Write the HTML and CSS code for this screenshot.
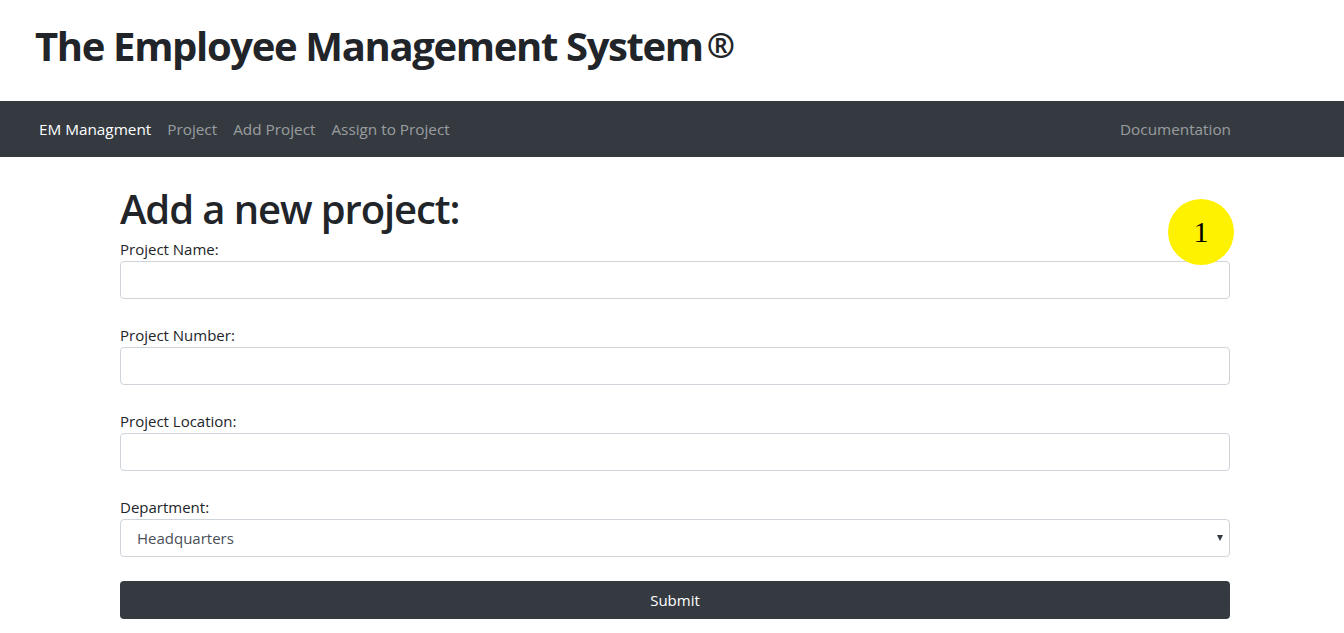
FILE: index.html
```html
<!DOCTYPE html>
<html lang="en">
<head>
<meta charset="utf-8">
<title>Add Project</title>
<link rel="stylesheet" href="styles.css">
</head>
<body>
<header class="site-header">
  <h1 class="site-title">The Employee Management System<span class="reg">®</span></h1>
</header>
<nav class="navbar">
  <div class="nav-left">
    <a class="nav-link active" href="#">EM Managment</a>
    <a class="nav-link" href="#">Project</a>
    <a class="nav-link" href="#">Add Project</a>
    <a class="nav-link" href="#">Assign to Project</a>
  </div>
  <a class="nav-link" href="#">Documentation</a>
</nav>
<main class="container">
  <h2 class="page-title">Add a new project:</h2>
  <div class="badge">1</div>
  <form class="form">
    <div class="form-group">
      <label class="label">Project Name:</label>
      <input class="control" type="text">
    </div>
    <div class="form-group">
      <label class="label">Project Number:</label>
      <input class="control" type="text">
    </div>
    <div class="form-group">
      <label class="label">Project Location:</label>
      <input class="control" type="text">
    </div>
    <div class="form-group">
      <label class="label">Department:</label>
      <div class="select-wrap">
        <select class="control select">
          <option>Headquarters</option>
        </select>
        <span class="caret"></span>
      </div>
    </div>
    <button class="submit" type="button">Submit</button>
  </form>
</main>
</body>
</html>
```
FILE: styles.css
```css
* { box-sizing: border-box; }
body {
  margin: 0;
  font-family: "Open Sans", "Noto Sans", sans-serif;
  color: #212529;
  background: #fff;
}
.site-header {
  height: 101px;
  padding: 21px 0 0 35px;
}
.site-title {
  margin: 0;
  font-size: 40px;
  font-weight: 700;
  line-height: 48px;
  letter-spacing: -1.35px;
}
.reg { font-size: 34px; margin-left: 4px; vertical-align: 3px; letter-spacing: 0; }
.navbar {
  height: 56px;
  background: #343a40;
  display: flex;
  align-items: center;
  justify-content: space-between;
  padding: 0 113px 0 39px;
}
.nav-left { display: flex; gap: 16px; }
.nav-link {
  color: rgba(255,255,255,0.5);
  text-decoration: none;
  font-size: 15.3px;
}
.nav-link.active { color: #fff; }
.container {
  position: relative;
  width: 1110px;
  margin-left: 120px;
  padding-top: 24px;
}
.page-title {
  margin: 0;
  font-size: 40px;
  font-weight: 600;
  line-height: 56px;
  letter-spacing: -1.1px;
}
.badge {
  position: absolute;
  left: 1048px;
  top: 42px;
  width: 66px;
  height: 66px;
  border-radius: 50%;
  background: #fff200;
  display: flex;
  align-items: center;
  justify-content: center;
  font-family: "Liberation Serif", serif;
  font-size: 30px;
  color: #000;
  z-index: 2;
}
.form { display: flex; flex-direction: column; gap: 24px; }
.form-group { display: flex; flex-direction: column; }
.label {
  font-size: 15px;
  line-height: 24px;
}
.control {
  height: 38px;
  width: 100%;
  border: 1px solid #ced4da;
  border-radius: 4px;
  font-family: inherit;
  font-size: 15px;
  color: #495057;
  background: #fff;
  padding: 0 16px;
}
.select-wrap { position: relative; }
.select { appearance: none; -webkit-appearance: none; }
.caret {
  position: absolute;
  right: 7px;
  top: 16px;
  width: 0; height: 0;
  border-left: 3px solid transparent;
  border-right: 3px solid transparent;
  border-top: 6px solid #343a40;
}
.submit {
  height: 38px;
  width: 100%;
  border: none;
  border-radius: 4px;
  background: #343a40;
  color: #fff;
  font-family: inherit;
  font-size: 15px;
}
```
